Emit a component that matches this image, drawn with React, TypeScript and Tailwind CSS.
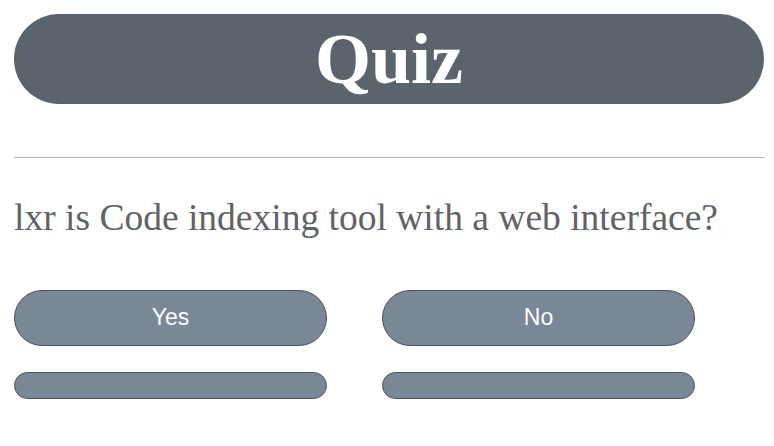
const answers = ["Yes", "No"];

const App = () => {
  return (
    <div className="min-h-[446px] w-full bg-white pl-[14px] pr-[10px] pt-[14px]">
      <div className="flex h-[90px] items-center justify-center rounded-full bg-[#5b646c]">
        <h1 className="font-['Liberation_Serif',serif] text-[72px] font-bold leading-none text-white">
          Quiz
        </h1>
      </div>

      <hr className="mt-[53px] border-t border-[#b3b3b3]" />

      <p className="mt-[41px] font-['Liberation_Serif',serif] text-[37.5px] leading-none text-[#5f6368]">
        lxr is Code indexing tool with a web interface?
      </p>

      <div className="mt-[53px] flex gap-[55px]">
        {answers.map((a) => (
          <button
            key={a}
            className="flex h-[56px] w-[313px] items-center justify-center rounded-full border border-[#4b5361] bg-[#798797] font-['Liberation_Sans',Arial,sans-serif] text-[23px] text-white"
          >
            {a}
          </button>
        ))}
      </div>

      <div className="mt-[26px] flex gap-[55px]">
        <div className="h-[27px] w-[313px] rounded-full border border-[#4b5361] bg-[#798797]" />
        <div className="h-[27px] w-[313px] rounded-full border border-[#4b5361] bg-[#798797]" />
      </div>
    </div>
  );
};

export default App;
